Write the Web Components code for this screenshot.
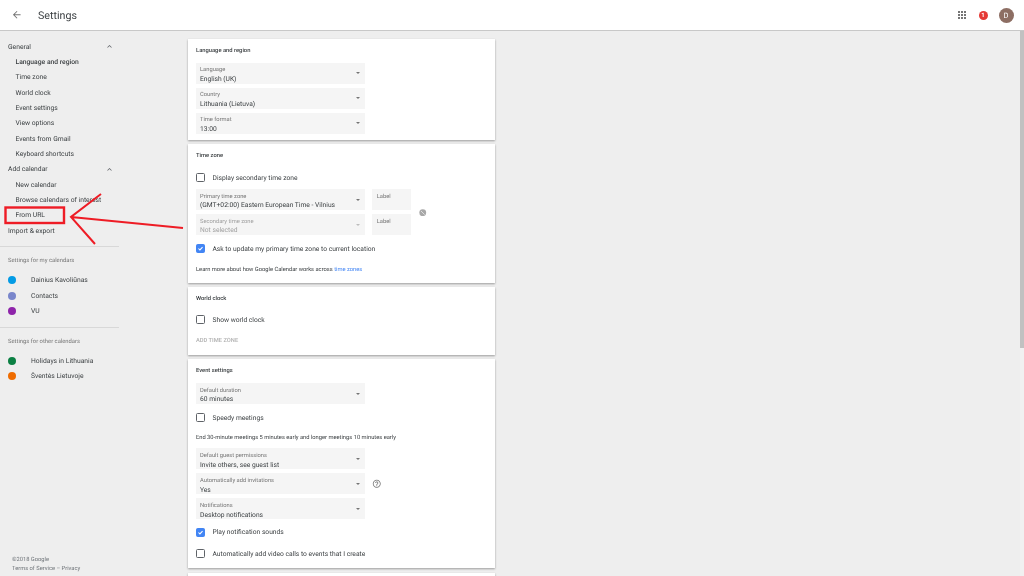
<!DOCTYPE html>
<html>
<head>
<meta charset="utf-8">
<title>Settings</title>
<style>
  html { background: #eeeeee; }
  html, body { margin: 0; height: 576px; overflow: hidden; }
  body { font-family: Roboto, "Noto Sans", sans-serif; color: #3c4043; position: relative; text-rendering: geometricPrecision; filter: blur(.25px); background: #eeeeee; }
  .layout { display: flex; height: 545px; overflow: hidden; }
</style>
</head>
<body>
<gc-header></gc-header>
<div class="layout">
  <gc-sidebar></gc-sidebar>
  <gc-content>
    <gc-card heading="Language and region" style="height:101px">
      <gc-select label="Language" value="English (UK)"></gc-select>
      <gc-select label="Country" value="Lithuania (Lietuva)"></gc-select>
      <gc-select label="Time format" value="13:00"></gc-select>
    </gc-card>
    <gc-card heading="Time zone" style="height:138.5px">
      <gc-check text="Display secondary time zone" style="margin-top:1px"></gc-check>
      <gc-tz-grid></gc-tz-grid>
      <gc-check text="Ask to update my primary time zone to current location" checked style="margin-top:5px"></gc-check>
      <gc-note style="margin-top:9px">Learn more about how Google Calendar works across <a>time zones</a></gc-note>
    </gc-card>
    <gc-card heading="World clock" style="height:67.5px">
      <gc-check text="Show world clock"></gc-check>
      <gc-note disabled style="margin-top:9px">ADD TIME ZONE</gc-note>
    </gc-card>
    <gc-card heading="Event settings" style="height:209px">
      <gc-select label="Default duration" value="60 minutes"></gc-select>
      <gc-check text="Speedy meetings" style="margin-top:1.2px"></gc-check>
      <gc-note style="margin:7.6px 0 6.7px">End 30-minute meetings 5 minutes early and longer meetings 10 minutes early</gc-note>
      <gc-select label="Default guest permissions" value="Invite others, see guest list"></gc-select>
      <gc-select label="Automatically add invitations" value="Yes" help></gc-select>
      <gc-select label="Notifications" value="Desktop notifications"></gc-select>
      <gc-check text="Play notification sounds" checked style="margin-top:.5px"></gc-check>
      <gc-check text="Automatically add video calls to events that I create" style="margin-top:4.5px"></gc-check>
    </gc-card>
    <gc-card style="height:40px"></gc-card>
  </gc-content>
</div>
<gc-scrollbar></gc-scrollbar>
<gc-annotation></gc-annotation>

<script>
(function () {
  // small helper, every element is the same: template string into an open root
  function define(name, css, html, init) {
    const template = document.createElement("template");
    template.innerHTML = `<style>${css}</style>${html}`;
    customElements.define(name, class extends HTMLElement {
      constructor() {
        super();
        this.attachShadow({ mode: "open" }).appendChild(template.content.cloneNode(true));
      }
      connectedCallback() {
        if (init) init(this, this.shadowRoot);
      }
    });
  }

  define("gc-header", `
    :host { display: flex; align-items: center; height: 30px; background: #fff; border-bottom: 1px solid #c8c8c8; padding: 0 10.5px 0 11.25px; }
    .back { width: 11.5px; height: 11.5px; display: block; }
    .title { font-size: 10.7px; color: #3c4043; margin-left: 15.25px; flex: 1; padding-top: 1px; }
    .grid { width: 12px; height: 12px; display: block; }
    .badge { width: 9px; height: 9px; border-radius: 50%; background: #e53935; color: #fff; font-size: 6px; font-weight: 700; display: flex; align-items: center; justify-content: center; margin-left: 11px; }
    .avatar { width: 15px; height: 15px; border-radius: 50%; background: #8d6e63; color: #fff; font-size: 7.5px; display: flex; align-items: center; justify-content: center; margin-left: 11px; }
  `, `
    <svg class="back" viewBox="0 0 24 24"><path fill="#757575" d="M20 11H7.83l5.59-5.59L12 4l-8 8 8 8 1.41-1.41L7.83 13H20z"/></svg>
    <div class="title">Settings</div>
    <svg class="grid" viewBox="0 0 24 24"><path fill="#757575" d="M4 8h4V4H4zm6 12h4v-4h-4zm-6 0h4v-4H4zm0-6h4v-4H4zm6 0h4v-4h-4zm6-10v4h4V4zm-6 4h4V4h-4zm6 6h4v-4h-4zm0 6h4v-4h-4z"/></svg>
    <div class="badge">1</div>
    <div class="avatar">D</div>
  `);

  define("gc-nav", `
    :host { display: flex; align-items: center; height: 15.33px; font-size: 6.75px; color: #3c4043; padding-left: 15.5px; white-space: nowrap; }
    :host([top]) { padding-left: 8px; }
    :host([active]) { font-weight: 500; }
    .grow { flex: 1; }
    svg { display: none; width: 9px; height: 9px; margin-right: 5px; }
    :host([chevron]) svg { display: block; }
  `, `<slot></slot><span class="grow"></span>
    <svg viewBox="0 0 24 24"><path fill="#5f6368" d="M12 8l-6 6 1.41 1.41L12 10.83l4.59 4.58L18 14z"/></svg>`);

  define("gc-cal", `
    :host { display: flex; align-items: center; height: 15.33px; font-size: 6.75px; color: #3c4043; padding-left: 7.5px; white-space: nowrap; }
    .dot { width: 8px; height: 8px; border-radius: 50%; margin-right: 15.5px; background: var(--dot); }
  `, `<span class="dot"></span><slot></slot>`);

  define("gc-sidebar", `
    :host { display: block; width: 188px; flex: none; position: relative; padding-top: 8px; box-sizing: border-box; }
    .list { width: 119px; }
    .rule { height: 1px; background: #d8d8d8; margin: 8px 0 0; }
    .cap { font-size: 5.85px; color: #757575; padding-left: 8px; height: 25.4px; line-height: 29.5px; }
    .foot { position: absolute; left: 12px; top: 525px; font-size: 5.75px; line-height: 9px; color: #70757a; white-space: nowrap; }
  `, `
    <div class="list">
      <gc-nav top chevron>General</gc-nav>
      <gc-nav active>Language and region</gc-nav>
      <gc-nav>Time zone</gc-nav>
      <gc-nav>World clock</gc-nav>
      <gc-nav>Event settings</gc-nav>
      <gc-nav>View options</gc-nav>
      <gc-nav>Events from Gmail</gc-nav>
      <gc-nav>Keyboard shortcuts</gc-nav>
      <gc-nav top chevron>Add calendar</gc-nav>
      <gc-nav>New calendar</gc-nav>
      <gc-nav>Browse calendars of interest</gc-nav>
      <gc-nav>From URL</gc-nav>
      <gc-nav top>Import &amp; export</gc-nav>
      <div class="rule"></div>
      <div class="cap">Settings for my calendars</div>
      <gc-cal style="--dot:#039be5">Dainius Kavoliūnas</gc-cal>
      <gc-cal style="--dot:#7986cb">Contacts</gc-cal>
      <gc-cal style="--dot:#8e24aa">VU</gc-cal>
      <div class="rule"></div>
      <div class="cap">Settings for other calendars</div>
      <gc-cal style="--dot:#0b8043">Holidays in Lithuania</gc-cal>
      <gc-cal style="--dot:#ef6c00">Šventės Lietuvoje</gc-cal>
    </div>
    <div class="foot">©2018 Google<br>Terms of Service – Privacy</div>
  `);

  define("gc-content", `
    :host { display: flex; flex-direction: column; gap: 4.5px; padding-top: 7.5px; width: 307px; flex: none; }
  `, `<slot></slot>`);

  define("gc-card", `
    :host { display: block; flex: none; background: #fff; box-shadow: 0 1px 2px rgba(0,0,0,.35); padding: 0 8px; box-sizing: border-box; }
    h2 { margin: 0; font-size: 5.8px; font-weight: 500; color: #3c4043; height: 24px; line-height: 25.5px; white-space: nowrap; }
    .gap { display: flex; flex-direction: column; }
  `, `<h2></h2><div class="gap"><slot></slot></div>`, (el, root) => {
    root.querySelector("h2").textContent = el.getAttribute("heading") || "";
  });

  define("gc-select", `
    :host { display: flex; align-items: center; position: relative; width: 169px; height: 21px; margin-bottom: 4px; background: #f5f5f5; box-sizing: border-box; padding: 5px 4px 0; color: #3c4043; }
    :host([disabled]) { color: #a0a0a0; }
    .txt { flex: 1; min-width: 0; }
    .lab { font-size: 5.75px; line-height: 7.5px; color: #757575; white-space: nowrap; }
    :host([disabled]) .lab { color: #9e9e9e; }
    .val { font-size: 6.7px; line-height: 9px; white-space: nowrap; }
    .caret { width: 0; height: 0; border-left: 2px solid transparent; border-right: 2px solid transparent; border-top: 2px solid #757575; margin: 0 1px 5px 0; }
    :host([disabled]) .caret { border-top-color: #bdbdbd; }
    .help { display: none; position: absolute; left: 175.5px; top: 5.25px; width: 9.5px; height: 9.5px; }
    :host([help]) .help { display: block; }
  `, `<div class="txt"><div class="lab"></div><div class="val"></div></div><div class="caret"></div>
    <svg class="help" viewBox="0 0 24 24"><path fill="#757575" d="M11 18h2v-2h-2zm1-16C6.48 2 2 6.48 2 12s4.48 10 10 10 10-4.48 10-10S17.52 2 12 2zm0 18c-4.41 0-8-3.59-8-8s3.59-8 8-8 8 3.59 8 8-3.59 8-8 8zm0-14c-2.21 0-4 1.79-4 4h2c0-1.1.9-2 2-2s2 .9 2 2c0 2-3 1.75-3 5h2c0-2.25 3-2.5 3-5 0-2.21-1.79-4-4-4z"/></svg>`, (el, root) => {
    root.querySelector(".lab").textContent = el.getAttribute("label");
    root.querySelector(".val").textContent = el.getAttribute("value");
  });

  define("gc-check", `
    :host { display: flex; align-items: center; height: 17px; font-size: 6.7px; color: #3c4043; white-space: nowrap; }
    .box { width: 9px; height: 9px; box-sizing: border-box; border: 1px solid #5f6368; border-radius: 1.5px; margin-right: 7.5px; flex: none; display: flex; }
    :host([checked]) .box { background: #4285f4; border-color: #4285f4; }
    svg { display: none; width: 100%; height: 100%; }
    :host([checked]) svg { display: block; }
  `, `
    <span class="box"><svg viewBox="0 0 24 24"><path fill="none" stroke="#fff" stroke-width="3.5" d="M5 12l5 5 9-10"/></svg></span>
    <span class="t"></span>
  `, (el, root) => {
    root.querySelector(".t").textContent = el.getAttribute("text");
  });

  define("gc-note", `
    :host { display: block; font-size: 5.75px; line-height: 8px; color: #3c4043; white-space: nowrap; }
    :host([disabled]) { color: #b0b0b0; font-weight: 500; }
    ::slotted(a) { color: #4285f4; }
  `, `<slot></slot>`);

  define("gc-label-box", `
    :host { display: block; width: 39px; height: 21px; background: #f5f5f5; font-size: 5.75px; line-height: 7.5px; color: #757575; padding: 5px 4.7px 0; box-sizing: border-box; }
  `, `Label`);

  define("gc-tz-grid", `
    :host { display: grid; grid-template-columns: 169px 39px 9px; column-gap: 7px; row-gap: 4px; margin-top: 3px; align-items: center; }
    gc-select { margin-bottom: 0; }
    svg { grid-column: 3; grid-row: 1 / span 2; width: 7.5px; height: 7.5px; display: block; margin: 1px 0 0 1px; }
  `, `
    <gc-select label="Primary time zone" value="(GMT+02:00) Eastern European Time - Vilnius"></gc-select>
    <gc-label-box></gc-label-box>
    <svg viewBox="0 0 24 24"><circle cx="12" cy="12" r="11" fill="#a8a8a8"/><path d="M6 6l12 12" stroke="#e0e0e0" stroke-width="3"/></svg>
    <gc-select disabled label="Secondary time zone" value="Not selected"></gc-select>
    <gc-label-box></gc-label-box>
  `);

  define("gc-scrollbar", `
    :host { position: absolute; top: 31px; right: 0; width: 4px; height: 545px; background: #f1f1f1; display: block; }
    div { height: 317px; background: #c1c1c1; }
  `, `<div></div>`);

  define("gc-annotation", `
    :host { position: absolute; left: 0; top: 0; display: block; pointer-events: none; }
    svg { display: block; width: 200px; height: 260px; }
  `, `
    <svg viewBox="0 0 200 260" fill="none" stroke="#ee1c25">
      <rect x="5.5" y="207.5" width="58.5" height="15.5" stroke-width="2.4"/>
      <path stroke-width="2" d="M101 194 L71 217 L95 244 M71 217 L183 228"/>
    </svg>
  `);
})();
</script>
</body>
</html>
